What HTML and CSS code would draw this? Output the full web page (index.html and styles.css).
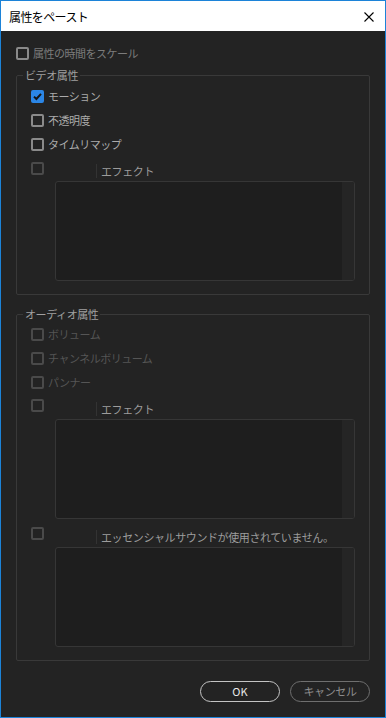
FILE: index.html
```html
<!DOCTYPE html>
<html lang="ja">
<head>
    <meta charset="UTF-8">
    <meta name="viewport" content="width=device-width, initial-scale=1.0">
    <title>属性をペースト</title>
    <link rel="stylesheet" href="styles.css">
</head>
<body>
    <div class="window">
        <!-- Title bar -->
        <div class="titlebar">
            <span class="title">属性をペースト</span>
            <svg class="close" width="10" height="10" viewBox="0 0 10 10">
                <path d="M0.5 0.5 L9.5 9.5 M9.5 0.5 L0.5 9.5" stroke="#000" stroke-width="1.1" fill="none"/>
            </svg>
        </div>

        <div class="dialog">
            <div class="row top-row">
                <span class="cb"></span>
                <span class="label dim">属性の時間をスケール</span>
            </div>

            <!-- Video attributes -->
            <fieldset class="group video">
                <legend>ビデオ属性</legend>
                <div class="row">
                    <span class="cb checked">
                        <svg width="13" height="13" viewBox="0 0 13 13">
                            <path d="M3 6.6 L5.4 9 L10 3.8" stroke="#151515" stroke-width="2" fill="none"/>
                        </svg>
                    </span>
                    <span class="label">モーション</span>
                </div>
                <div class="row">
                    <span class="cb"></span>
                    <span class="label">不透明度</span>
                </div>
                <div class="row">
                    <span class="cb"></span>
                    <span class="label">タイムリマップ</span>
                </div>
                <div class="fx">
                    <div class="fx-head">
                        <span class="cb disabled"></span>
                        <span class="fx-title">エフェクト</span>
                    </div>
                    <div class="fx-list"><div class="fx-scroll"></div></div>
                </div>
            </fieldset>

            <!-- Audio attributes -->
            <fieldset class="group audio">
                <legend>オーディオ属性</legend>
                <div class="row">
                    <span class="cb disabled"></span>
                    <span class="label off">ボリューム</span>
                </div>
                <div class="row">
                    <span class="cb disabled"></span>
                    <span class="label off">チャンネルボリューム</span>
                </div>
                <div class="row">
                    <span class="cb disabled"></span>
                    <span class="label off">パンナー</span>
                </div>
                <div class="fx">
                    <div class="fx-head">
                        <span class="cb disabled"></span>
                        <span class="fx-title">エフェクト</span>
                    </div>
                    <div class="fx-list"><div class="fx-scroll"></div></div>
                </div>
                <div class="fx second">
                    <div class="fx-head">
                        <span class="cb disabled"></span>
                        <span class="fx-title">エッセンシャルサウンドが使用されていません。</span>
                    </div>
                    <div class="fx-list"><div class="fx-scroll"></div></div>
                </div>
            </fieldset>

            <div class="buttons">
                <button class="btn ok">OK</button>
                <button class="btn cancel">キャンセル</button>
            </div>
        </div>
    </div>
</body>
</html>
```

FILE: styles.css
```css
html, body {
    margin: 0;
    padding: 0;
}
body {
    font-family: "Noto Sans CJK JP", "Noto Sans", sans-serif;
    font-size: 11px;
    background-color: #232323;
}
.window {
    width: 386px;
    height: 718px;
    box-sizing: border-box;
    border: 1px solid #1c83d8;
    display: flex;
    flex-direction: column;
}
.titlebar {
    height: 30px;
    background-color: #fff;
    display: flex;
    align-items: center;
    justify-content: space-between;
    padding: 0 11px 0 8px;
}
.title {
    font-size: 12px;
    letter-spacing: -0.6px;
    color: #000;
    padding-top: 1px;
}
.close {
    margin-top: 1px;
}
.dialog {
    flex: 1;
    background-color: #232323;
    padding: 12px 15px 0 15px;
    display: flex;
    flex-direction: column;
}
.row {
    height: 24px;
    display: flex;
    align-items: center;
}
.top-row {
    height: 20px;
}
.cb {
    width: 13px;
    height: 13px;
    box-sizing: border-box;
    border: 2px solid #8a8a8a;
    border-radius: 2px;
    flex-shrink: 0;
    position: relative;
}
.cb.checked {
    background-color: #2b86e6;
    border-color: #2b86e6;
}
.cb.checked svg {
    position: absolute;
    left: -2px;
    top: -2px;
}
.cb.disabled {
    border-color: #4a4a4a;
}
.label {
    margin-left: 4px;
    color: #ababab;
    letter-spacing: -0.5px;
    line-height: 14px;
}
.label.dim {
    color: #7c7c7c;
}
.label.off {
    color: #555;
}
.group {
    margin: 0;
    padding: 1px 14px 13px 14px;
    border: 1px solid #393939;
    border-radius: 2px;
    min-width: 0;
}
.group.video {
    margin-top: 4px;
}
.group.audio {
    margin-top: 11px;
    padding-top: 0;
}
legend {
    padding: 0 2px;
    margin-left: -8px;
    line-height: 16px;
    color: #a0a0a0;
    letter-spacing: -0.4px;
}
.fx-head {
    height: 24px;
    display: flex;
    align-items: flex-start;
}
.fx-head .cb {
    margin-top: 6px;
}
.audio .fx-head .cb {
    margin-top: 5px;
}
.fx-title {
    margin-left: 52px;
    margin-top: 8px;
    padding-left: 4px;
    border-left: 1px solid #333;
    line-height: 14px;
    color: #9c9c9c;
    letter-spacing: -0.4px;
    white-space: nowrap;
}
.fx-list {
    margin: 1px 0 0 24px;
    height: 100px;
    box-sizing: border-box;
    border: 1px solid #363636;
    border-radius: 3px;
    background-color: #1e1e1e;
    display: flex;
    justify-content: flex-end;
    overflow: hidden;
}
.fx-scroll {
    width: 12px;
    background-color: #252525;
}
.fx.second {
    margin-top: 3px;
}
.buttons {
    margin-top: 20px;
    display: flex;
    justify-content: flex-end;
    gap: 10px;
}
.btn {
    width: 80px;
    height: 21px;
    border-radius: 11px;
    background: transparent;
    font-family: "Noto Sans CJK JP", "Noto Sans", sans-serif;
    font-size: 11px;
    padding: 0;
    line-height: 17px;
}
.btn.ok {
    border: 1.5px solid #c4c4c4;
    color: #e8e8e8;
}
.btn.cancel {
    border: 1.5px solid #6f6f6f;
    color: #8e8e8e;
    letter-spacing: -0.4px;
}
```
